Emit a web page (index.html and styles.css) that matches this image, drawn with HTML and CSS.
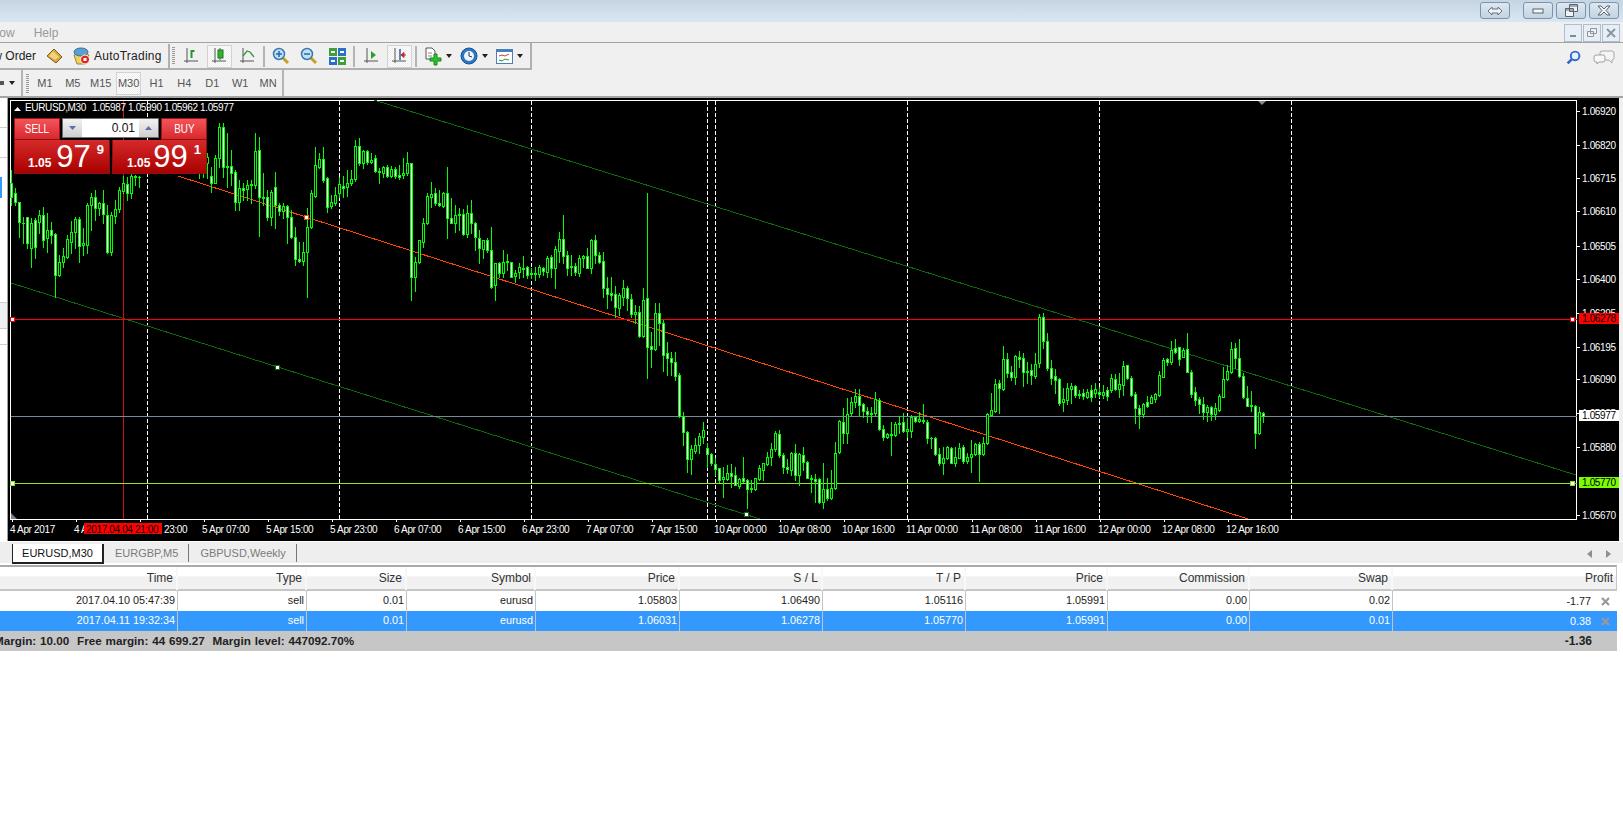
FILE: index.html
```html
<!DOCTYPE html>
<html lang="en">
<head>
    <meta charset="UTF-8">
    <meta name="viewport" content="width=device-width, initial-scale=1.0">
    <title>MetaTrader - EURUSD,M30</title>
    <link rel="stylesheet" href="styles.css">
</head>
<body>

<div class="titlebar">
    <div class="win-btn win-btn-switch">
        <svg width="16" height="10" viewBox="0 0 16 10"><path d="M5 1 1 5l4 4V7h6v2l4-4-4-4v2H5z" fill="#eef3f7" stroke="#66727e"/></svg>
    </div>
    <div class="win-btn win-btn-min">
        <svg width="12" height="6" viewBox="0 0 12 6"><rect x="1" y="1" width="10" height="4" fill="#f4f6f8" stroke="#56626e"/></svg>
    </div>
    <div class="win-btn">
        <svg width="13" height="13" viewBox="0 0 13 13"><path d="M4.500 .5h8v7h-8zM.5 4.500h8v8h-8z" fill="#eef3f7" stroke="#56626e"/><path d="M1 6h7M5 2h7" stroke="#56626e"/></svg>
    </div>
    <div class="win-btn">
        <svg width="14" height="11" viewBox="0 0 14 11"><path d="M1 1h3l3 3 3-3h3L9 5.500l4 4.500h-3L7 7l-3 3H1l4-4.500z" fill="#f4f6f8" stroke="#56626e"/></svg>
    </div>
</div>

<div class="menubar">
    <span class="menu-item menu-clipped">Window</span>
    <span class="menu-item">Help</span>
    <div class="mdi-buttons">
        <div class="mdi-btn"><svg width="8" height="8" viewBox="0 0 8 8"><path d="M1 7h6" stroke="#7d8c9b" stroke-width="2"/></svg></div>
        <div class="mdi-btn"><svg width="10" height="10" viewBox="0 0 10 10"><path d="M3.500 .5h6v5h-6zM.5 3.500h6v5h-6z" fill="#f0f0f0" stroke="#8a96a2"/></svg></div>
        <div class="mdi-btn"><svg width="10" height="10" viewBox="0 0 10 10"><path d="M1 1l8 8M9 1 1 9" stroke="#8a96a2" stroke-width="2"/></svg></div>
    </div>
</div>

<div class="toolrow">
    <div class="toolbar">
        <div class="tb-left">
            <span class="tb-text tb-clipped">New Order</span>
            <svg class="tb-book" width="17" height="16" viewBox="0 0 17 16"><path d="M8 1 16 9l-6 6-9-7z" fill="#d9a53c" stroke="#7f5a17"/><path d="M7 3l6 6-4 3-6-4z" fill="#f3d27a"/></svg>
            <svg class="tb-auto" width="17" height="18" viewBox="0 0 17 18"><path d="M1 8 9 5l7 3-3 9H4z" fill="#f0d060" stroke="#9a8430"/><ellipse cx="8" cy="5" rx="7" ry="4" fill="#5aa0d0" stroke="#36709c"/><circle cx="12" cy="12.500" r="4.500" fill="#e02818" stroke="#fff"/><rect x="10.500" y="11" width="3" height="3" fill="#fff"/></svg>
            <span class="tb-text tb-auto-text">AutoTrading</span>
        </div>
        <div class="gripper"></div>
        <div class="tool">
            <svg width="16" height="18" viewBox="0 0 16 18"><path d="M4 1v15M1 14h14" stroke="#555" fill="none"/><path d="M8.500 11V4h3" stroke="#1f9a2a" stroke-width="2" fill="none"/></svg>
        </div>
        <div class="tool tool-on">
            <svg width="16" height="18" viewBox="0 0 16 18"><path d="M4 1v15M1 14h14M9 1v12" stroke="#555" fill="none"/><rect x="7" y="3" width="5" height="8" fill="#35b030" stroke="#1b7a1c"/></svg>
        </div>
        <div class="tool">
            <svg width="16" height="18" viewBox="0 0 16 18"><path d="M4 1v15M1 14h14" stroke="#555" fill="none"/><path d="M4 9l4-5 3 1 4 5" stroke="#2f9a3a" stroke-width="1.300" fill="none"/></svg>
        </div>
        <div class="tb-sep"></div>
        <div class="tool">
            <svg width="18" height="18" viewBox="0 0 18 18"><path d="M11 11l5 5" stroke="#c8a020" stroke-width="3"/><circle cx="7" cy="7" r="5.500" fill="#bfe0f5" stroke="#3a78b0" stroke-width="1.500"/><path d="M4 7h6M7 4v6" stroke="#2a68a8" stroke-width="1.500"/></svg>
        </div>
        <div class="tool">
            <svg width="18" height="18" viewBox="0 0 18 18"><path d="M11 11l5 5" stroke="#c8a020" stroke-width="3"/><circle cx="7" cy="7" r="5.500" fill="#bfe0f5" stroke="#3a78b0" stroke-width="1.500"/><path d="M4 7h6" stroke="#2a68a8" stroke-width="1.500"/></svg>
        </div>
        <div class="tool">
            <svg width="17" height="17" viewBox="0 0 17 17"><rect width="8" height="8" fill="#3fa03a"/><rect x="9" width="8" height="8" fill="#2c6fc8"/><rect y="9" width="8" height="8" fill="#2c6fc8"/><rect x="9" y="9" width="8" height="8" fill="#3fa03a"/><path d="M2 4h4M11 4h4M2 13h4M11 13h4" stroke="#fff" stroke-width="2"/></svg>
        </div>
        <div class="tb-sep"></div>
        <div class="tool">
            <svg width="16" height="18" viewBox="0 0 16 18"><path d="M4 1v15M1 14h14" stroke="#555" fill="none"/><path d="M8 4l5 4-5 4z" fill="#2aa02a"/></svg>
        </div>
        <div class="tool tool-on">
            <svg width="16" height="18" viewBox="0 0 16 18"><path d="M4 1v15M1 14h14" stroke="#555" fill="none"/><path d="M9 2v11" stroke="#2a5fa8" stroke-width="1.500"/><path d="M15 8h-3M10 8l3-2.500v5z" fill="#c8281e" stroke="#c8281e"/></svg>
        </div>
        <div class="tb-sep"></div>
        <div class="tool-menu tool-menu-first">
            <svg width="18" height="19" viewBox="0 0 18 19"><path d="M2 1h6l3 3v8H2z" fill="#fff" stroke="#555"/><path d="M4 6h4M4 9h4" stroke="#888"/><path d="M10 7h3v4h4v3h-4v4h-3v-4H6v-3h4z" fill="#2fc02f" stroke="#178a17"/></svg>
            <span class="drop"></span>
        </div>
        <div class="tool-menu">
            <svg width="18" height="18" viewBox="0 0 18 18"><circle cx="9" cy="9" r="8" fill="#2a78c8" stroke="#1a4f90"/><circle cx="9" cy="9" r="5" fill="#eef5fb"/><path d="M9 5v4l3 1" stroke="#333" fill="none"/></svg>
            <span class="drop"></span>
        </div>
        <div class="tool-menu">
            <svg width="17" height="15" viewBox="0 0 17 15"><rect x=".5" y=".5" width="16" height="14" fill="#fff" stroke="#4f7fae"/><rect x="1" y="1" width="15" height="2" fill="#3f80c4"/><path d="M3 7l3-1 3 1 4-2" stroke="#c84030" fill="none"/><path d="M3 11l3 1 3-2 4 1" stroke="#2f9a3a" fill="none"/></svg>
            <span class="drop"></span>
        </div>
    </div>
    <div class="tb-right">
        <svg width="15" height="15" viewBox="0 0 14 14"><circle cx="8.500" cy="5.500" r="4" fill="#e8f1fb" stroke="#2f68c8" stroke-width="1.800"/><path d="M5.500 8.500 1.500 12.500" stroke="#2f68c8" stroke-width="2.500"/></svg>
        <svg width="22" height="15" viewBox="0 0 22 15"><path d="M9 1h10q2 0 2 2v5q0 2-2 2v3l-3-3H9q-2 0-2-2V3q0-2 2-2z" fill="#f4f4f4" stroke="#a8a8a8"/><path d="M3 5h7q2 0 2 2v3q0 2-2 2H6l-2 2v-2H3q-2 0-2-2V7q0-2 2-2z" fill="#f8f8f8" stroke="#a0a0a0"/></svg>
    </div>
</div>

<div class="toolrow toolrow-periods">
    <div class="periods">
        <div class="periods-left">
            <span class="mini-tool"></span>
            <span class="drop"></span>
        </div>
        <div class="gripper gripper-small"></div>
        <div class="period">M1</div>
        <div class="period">M5</div>
        <div class="period">M15</div>
        <div class="period period-on">M30</div>
        <div class="period">H1</div>
        <div class="period">H4</div>
        <div class="period">D1</div>
        <div class="period">W1</div>
        <div class="period">MN</div>
    </div>
</div>

<div class="workspace">
    <div class="navigator">
        <div class="nav-block nav-a"></div>
        <div class="nav-block nav-b"></div>
        <div class="nav-block nav-c"><div class="nav-selected"></div></div>
        <div class="nav-block nav-d"></div>
        <div class="nav-block nav-e"></div>
    </div>
    <div class="chart">
        <svg id="chart-svg" class="chart-svg" width="1611" height="443" viewBox="8 98 1611 443"></svg>
        <div class="trade-panel">
            <div class="trade-top">
                <div class="trade-btn"><span class="trade-word">SELL</span></div>
                <div class="lot">
                    <div class="lot-arrow"><svg width="7" height="4" viewBox="0 0 7 4"><path d="M0 0h7L3.500 4z" fill="#5a6fb0"/></svg></div>
                    <div class="lot-value">0.01</div>
                    <div class="lot-arrow"><svg width="7" height="4" viewBox="0 0 7 4"><path d="M0 4h7L3.500 0z" fill="#5a6fb0"/></svg></div>
                </div>
                <div class="trade-btn"><span class="trade-word">BUY</span></div>
            </div>
            <div class="trade-bottom">
                <div class="quote quote-sell"><span class="q-small">1.05</span><span class="q-big">97</span><span class="q-sup">9</span></div>
                <div class="quote quote-buy"><span class="q-small">1.05</span><span class="q-big">99</span><span class="q-sup">1</span></div>
            </div>
        </div>
    </div>
</div>

<div class="tabbar">
    <div class="tab tab-active">EURUSD,M30</div>
    <div class="tab">EURGBP,M5</div>
    <div class="tab">GBPUSD,Weekly</div>
    <div class="tab-arrows">
        <svg width="5" height="8" viewBox="0 0 5 8"><path d="M5 0v8L0 4z" fill="#8f8f8f"/></svg>
        <svg width="5" height="8" viewBox="0 0 5 8"><path d="M0 0v8l5-4z" fill="#8f8f8f"/></svg>
    </div>
</div>

<div class="blotter">
    <div class="blotter-row blotter-head">
        <div>Time</div><div>Type</div><div>Size</div><div>Symbol</div><div>Price</div><div>S / L</div><div>T / P</div><div>Price</div><div>Commission</div><div>Swap</div><div>Profit</div>
    </div>
    <div class="blotter-row">
        <div>2017.04.10 05:47:39</div><div>sell</div><div>0.01</div><div>eurusd</div><div>1.05803</div><div>1.06490</div><div>1.05116</div><div>1.05991</div><div>0.00</div><div>0.02</div>
        <div class="profit-cell">-1.77<svg class="close-x" width="9" height="9" viewBox="0 0 9 9"><path d="M1 1l7 7M8 1 1 8" stroke="#999" stroke-width="2.200"/></svg></div>
    </div>
    <div class="blotter-row blotter-selected">
        <div>2017.04.11 19:32:34</div><div>sell</div><div>0.01</div><div>eurusd</div><div>1.06031</div><div>1.06278</div><div>1.05770</div><div>1.05991</div><div>0.00</div><div>0.01</div>
        <div class="profit-cell">0.38<svg class="close-x" width="9" height="9" viewBox="0 0 9 9"><path d="M1 1l7 7M8 1 1 8" stroke="#999" stroke-width="2.200"/></svg></div>
    </div>
    <div class="blotter-summary">
        <div class="summary-text">Margin: 10.00&nbsp; Free margin: 44 699.27&nbsp; Margin level: 447092.70%</div>
        <div class="summary-profit">-1.36</div>
    </div>
</div>

<script src="chart.js"></script>
</body>
</html>
```

FILE: styles.css
```css
body {
    font-family: "Liberation Sans", Arial, sans-serif;
    margin: 0;
    padding: 0;
    background-color: #ffffff;
    color: #222222;
    overflow: hidden;
    height: 834px;
    font-size: 12px;
}

/* window title */
.titlebar {
    height: 22px;
    display: flex;
    justify-content: flex-end;
    align-items: flex-start;
    padding: 2px 4px 0 0;
    box-sizing: border-box;
    background: linear-gradient(#c6d5e2, #d9e7f3);
}
.win-btn {
    width: 30px;
    height: 17px;
    box-sizing: border-box;
    margin-left: 3px;
    border: 1px solid #7f93a8;
    border-radius: 3px;
    display: flex;
    align-items: center;
    justify-content: center;
    background: linear-gradient(#dce8f2, #c3d3e1);
}
.win-btn-min { margin-left: 13px; }

/* menu */
.menubar {
    height: 20px;
    box-sizing: border-box;
    display: flex;
    align-items: center;
    padding-top: 1px;
    background-color: #f0f0f0;
    overflow: hidden;
}
.menu-item {
    color: #999999;
    font-size: 12px;
    margin-right: 19px;
    padding-top: 1px;
}
.menu-clipped { margin-left: -28px; }
.mdi-buttons {
    display: flex;
    gap: 1px;
    margin-left: auto;
    margin-right: 3px;
}
.mdi-btn {
    width: 18px;
    height: 18px;
    box-sizing: border-box;
    border: 1px solid #a9bfd4;
    background-color: #e8eef4;
    display: flex;
    align-items: center;
    justify-content: center;
}

/* toolbars */
.toolrow {
    display: flex;
    height: 28px;
    box-sizing: border-box;
    border-top: 1px solid #a3a3a3;
    background-color: #f0f0f0;
}
.toolrow-periods {
    border-top: none;
    border-bottom: 2px solid #a3a3a3;
}
.toolbar {
    width: 532px;
    display: flex;
    align-items: center;
    box-sizing: border-box;
    padding-top: 1px;
    border-right: 2px solid #b0b0b0;
    border-bottom: 2px solid #b0b0b0;
}
.tb-left {
    width: 170px;
    height: 100%;
    flex-shrink: 0;
    box-sizing: border-box;
    display: flex;
    align-items: center;
    overflow: hidden;
    border-right: 2px solid #b0b0b0;
}
.tb-text { font-size: 12px; color: #222222; white-space: nowrap; }
.tb-auto-text { letter-spacing: 0.250px; }
.tb-clipped { margin-left: -22px; }
.tb-book { margin-left: 10px; }
.tb-auto { margin: 0 4px 0 10px; }
.gripper {
    width: 3px;
    height: 18px;
    margin: 0 2px;
    flex-shrink: 0;
    background: repeating-linear-gradient(#9a9a9a 0 1px, #f0f0f0 1px 2px);
}
.gripper-small { margin: 0 2px 0 3px; height: 19px; }
.tool {
    width: 25px;
    height: 23px;
    margin: 0 1.5px;
    box-sizing: border-box;
    flex-shrink: 0;
    display: flex;
    align-items: center;
    justify-content: center;
}
.tool-on, .period-on {
    border: 1.5px solid #d2d2d2;
    background: repeating-conic-gradient(#ffffff 0 25%, #ececec 0 50%) 0 0 / 2px 2px;
}
.tool-menu {
    display: flex;
    align-items: center;
    gap: 4px;
    flex-shrink: 0;
    margin-left: 8px;
}
.tool-menu-first { margin-left: 5px; }
.tb-sep {
    width: 2px;
    height: 21px;
    margin: 0 2px;
    flex-shrink: 0;
    background-color: #b4b4b4;
}
.drop {
    width: 0;
    height: 0;
    flex-shrink: 0;
    border-left: 3.500px solid transparent;
    border-right: 3.500px solid transparent;
    border-top: 4px solid #222222;
}
.tb-right {
    margin-left: auto;
    width: 65px;
    padding: 1px 8px 0 8px;
    box-sizing: border-box;
    display: flex;
    align-items: center;
    justify-content: space-between;
}
.periods {
    display: flex;
    align-items: center;
    height: 26px;
    width: 284px;
    box-sizing: border-box;
    border-right: 2px solid #b4b4b4;
}
.periods-left {
    width: 23px;
    height: 100%;
    box-sizing: border-box;
    flex-shrink: 0;
    display: flex;
    align-items: center;
    gap: 5px;
    border-right: 2px solid #b4b4b4;
}
.mini-tool {
    width: 4px;
    height: 4px;
    background-color: #555555;
}
.period {
    width: 25px;
    height: 23px;
    margin: 0 1.5px;
    box-sizing: border-box;
    display: flex;
    align-items: center;
    justify-content: center;
    font-size: 11px;
    color: #555555;
}

/* chart and navigator */
.workspace {
    display: flex;
    height: 443px;
    background-color: #f0f0f0;
}
.navigator {
    width: 8px;
    box-sizing: border-box;
    flex-shrink: 0;
    background-color: #ffffff;
    border-right: 1px solid #a0a0a0;
}
.nav-block { border-bottom: 1px solid #cfcfcf; box-sizing: border-box; }
.nav-a { height: 30px; }
.nav-b { height: 30px; }
.nav-c { height: 145px; padding-top: 19px; }
.nav-d { height: 26px; background-color: #f0f0f0; }
.nav-e { height: 16px; }
.nav-selected { width: 2px; height: 21px; background-color: #3399ff; }
.chart {
    width: 1611px;
    height: 443px;
    position: relative;
    background-color: #000000;
}
.chart-svg {
    display: block;
    font-family: "Liberation Sans", Arial, sans-serif;
    font-size: 10px;
    letter-spacing: -0.350px;
}

/* one click trading panel */
.trade-panel {
    position: absolute;
    left: 6px;
    top: 20px;
    width: 193px;
    color: #ffffff;
}
.trade-top { display: flex; height: 22px; }
.trade-btn {
    width: 46px;
    box-sizing: border-box;
    padding-bottom: 1px;
    display: flex;
    align-items: center;
    justify-content: center;
    background: linear-gradient(#f2555a, #d8282d);
    border: 1px solid #a01414;
    border-bottom: 1px solid #8e1010;
}
.trade-word {
    display: inline-block;
    font-size: 13px;
    transform: scaleX(0.76);
}
.lot {
    width: 97px;
    height: 20px;
    margin: 0 2px;
    box-sizing: border-box;
    border: 1px solid #6f6f6f;
    background-color: #ffffff;
    display: flex;
}
.lot-arrow {
    width: 19px;
    flex-shrink: 0;
    display: flex;
    align-items: center;
    justify-content: center;
    background: linear-gradient(#f2f2f2, #cfcfcf);
}
.lot-value {
    flex: 1;
    color: #111111;
    font-size: 12px;
    line-height: 18px;
    text-align: right;
    padding-right: 4px;
}
.trade-bottom { display: flex; justify-content: space-between; height: 34px; }
.quote {
    box-sizing: border-box;
    display: flex;
    align-items: baseline;
    height: 34px;
    line-height: 34px;
    background: linear-gradient(#d62a2a, #a80000);
    border: 1px solid #8e1010;
    border-top: none;
}
.quote-sell { width: 96px; padding-left: 13px; }
.quote-buy { width: 95px; padding-left: 14px; }
.q-small { font-size: 12px; font-weight: bold; margin-right: 5px; }
.quote-buy .q-small { margin-right: 3px; }
.q-big { font-size: 31px; }
.q-sup { font-size: 13px; font-weight: bold; line-height: 13px; margin-left: 6px; align-self: flex-start; margin-top: 3px; }

/* tabs */
.tabbar {
    height: 22px;
    box-sizing: border-box;
    margin-bottom: 2px;
    padding: 2px 0 0 12px;
    display: flex;
    background-color: #eeeeee;
    border-top: 1px solid #ffffff;
}
.tab {
    height: 18px;
    padding: 0 10px 0 11px;
    font-size: 11px;
    line-height: 18px;
    color: #7a7a7a;
    position: relative;
    border-right: 1px solid #777777;
}
.tab-active {
    width: 89px;
    padding: 0;
    text-align: center;
    color: #111111;
    background-color: #ffffff;
    border-left: 1px solid #222222;
    border-right: 2px solid #222222;
    border-bottom: 2px solid #222222;
}
.tab-arrows {
    margin-left: auto;
    width: 24px;
    margin-right: 12px;
    display: flex;
    justify-content: space-between;
    align-items: center;
}

/* terminal table */
.blotter { width: 1617px; }
.blotter-row {
    display: grid;
    grid-template-columns: 178px 129px 100px 129px 144px 143px 143px 142px 142px 143px 1fr;
    height: 20px;
    line-height: 19px;
    font-size: 10.800px;
    text-align: right;
    color: #222222;
}
.blotter-row div {
    padding-right: 2px;
    box-sizing: border-box;
    border-right: 1.500px solid #c4c4c4;
    white-space: nowrap;
}
.blotter-row .profit-cell {
    border-right: none;
    padding-right: 7px;
    display: flex;
    justify-content: flex-end;
    align-items: center;
}
.close-x { margin-left: 10px; }
.blotter-head {
    height: 26px;
    line-height: 23px;
    font-size: 12px;
    color: #333333;
    box-sizing: border-box;
    border-top: 2px solid #aaaaaa;
    border-bottom: 2px solid #c6c6c6;
    border-right: 1px solid #c6c6c6;
    background: linear-gradient(#ffffff 40%, #f0f0f0 45%, #f2f2f2);
}
.blotter-head div {
    padding-right: 3px;
    border-right: 2px solid #f8f8f8;
}
.blotter-head div:last-child { border-right: none; }
.blotter-selected {
    background-color: #3399ff;
    color: #ffffff;
}
.blotter-summary {
    height: 20px;
    display: flex;
    justify-content: space-between;
    line-height: 20px;
    font-size: 11.700px;
    font-weight: bold;
    color: #222222;
    background-color: #c6c6c6;
    overflow: hidden;
}
.summary-text { margin-left: -6px; white-space: nowrap; word-spacing: 0.600px; }
.summary-profit { padding-right: 25px; font-size: 12px; }
```

FILE: chart.js
```javascript
// Draws the EURUSD,M30 chart into the svg. Coordinates are page pixels
const svg = document.getElementById('chart-svg');
const NS = 'http://www.w3.org/2000/svg';

function add(name, attrs, parent, text) {
    const el = document.createElementNS(NS, name);
    for (const key in attrs) {
        el.setAttribute(key, attrs[key]);
    }
    if (text) el.textContent = text;
    (parent || svg).appendChild(el);
    return el;
}

function box(x, y, w, h, fill, parent) {
    return add('rect', { x: x, y: y, width: w, height: h, fill: fill, 'shape-rendering': 'crispEdges' }, parent);
}

function label(x, y, text, fill) {
    return add('text', { x: x, y: y, fill: fill || '#ffffff' }, svg, text);
}

// plot frame
add('rect', { x: 10.5, y: 100.5, width: 1566, height: 419, fill: 'none', stroke: '#ffffff', 'shape-rendering': 'crispEdges' });

// day separators
[147, 339, 531, 707, 715, 907, 1099, 1291].forEach(x => {
    add('line', { x1: x + 0.5, y1: 101, x2: x + 0.5, y2: 519, stroke: '#ffffff', 'stroke-dasharray': '4 2', 'shape-rendering': 'crispEdges' });
});

// crosshair
box(123, 101, 1, 418, '#cc1414');

// regression channel
const diagonals = [
    [374, 100, 1576, 475, '#0b6a0b'],
    [11, 283, 760, 519, '#0b6a0b'],
    [178, 176, 1248, 519, '#ff4500']
];
diagonals.forEach(d => {
    add('line', { x1: d[0], y1: d[1], x2: d[2], y2: d[3], stroke: d[4], 'shape-rendering': 'crispEdges' });
});

// order levels and bid line
box(11, 319, 1566, 1, '#ff0000');
box(11, 416, 1566, 1, '#778899');
box(11, 483, 1566, 1, '#8ee62a');

// each bar: body top, body bottom, high, low (in thirds of a pixel from the segment's y)
const segments = [
    { x: 11, y: 90, bars: [
        [280,320,240,345],[310,335,295,345],[335,395,335,440],[398,400,380,460],[380,460,380,475],[400,475,385,530],
        [390,470,385,505],[375,395,360,430],[375,450,350,470],[420,445,370,485],[420,435,395,460],[433,555,430,622],
        [517,555,495,558],[498,517,475,530],[448,502,435,505],[427,457,393,490],[388,427,380,475],[388,468,380,515],
        [460,465,415,495],[345,465,340,490],[320,345,310,420],[322,355,300,390],[340,355,335,375],[340,373,300,400],
        [375,485,345,490],[375,485,365,495],[358,378,330,400],[300,358,290,365],[280,302,258,310],[283,310,260,330],
        [258,310,250,325],[258,260,255,285],[260,262,258,290]
    ] },
    { x: 199, y: 90, bars: [
        [200,220,190,265],[200,220,190,262],[200,220,190,265],
        [258,278,230,305],[205,278,195,280],[112,205,100,230],[112,230,100,260],[228,232,130,290],[228,248,180,285],
        [245,335,240,360],[295,335,270,360],[295,300,280,330],[285,298,270,330],[282,285,270,340],[183,285,130,295],
        [180,322,140,438],[322,325,250,345],[322,380,300,390],[305,380,300,405],[292,345,245,415],[345,362,340,375],
        [348,362,340,385],[348,382,345,460],[380,442,360,445],[442,508,410,525],[508,512,455,515],[485,512,455,525],
        [412,485,355,622],[310,412,300,415],[225,318,170,320],[208,230,190,235],[208,270,170,275],[265,350,260,365],
        [337,347,315,355],[316,340,290,345],[283,310,260,320],[287,295,258,320],[280,292,240,318],[268,280,240,285],
        [168,268,150,272],[168,220,145,225],[183,220,180,235],[183,217,180,222],[210,217,190,220],[205,242,195,245],
        [242,247,235,280],[232,250,228,262],[232,258,225,262],[238,258,228,262],[238,257,232,265],[255,260,225,268],
        [248,256,205,265],[220,248,185,255],[220,560,218,630],[517,560,500,602],[450,515,450,520],[400,455,385,470],
        [318,400,310,402],[313,320,275,350],[310,340,295,345],[340,344,300,348],[310,348,305,352],[310,385,232,445],
        [385,398,325,400],[375,398,345,425],[373,376,355,420],[372,433,358,435],[368,433,345,440],[368,400,330,430],
        [398,440,395,480],[445,475,420,520],[450,478,450,505],[450,480,445,485],[480,590,410,595],[520,585,520,630],
        [518,550,515,560]
    ] },
    { x: 503, y: 180, bars: [
        [245,280,210,290],[244,246,222,270],[246,290,245,292],[280,287,270,305],[262,277,250,295],[263,268,228,290],
        [262,285,258,295],[278,282,265,295],[280,281,260,300],[262,282,255,290],[265,272,260,285],[235,275,228,290],
        [232,265,225,290],[207,265,198,323],[178,212,155,245],[178,228,105,250],[225,263,212,285],[258,262,225,285],
        [258,275,250,285],[235,278,225,288],[228,235,225,260],[228,263,205,265],[180,263,176,280],[180,225,165,250],
        [225,245,215,250],[244,325,215,350],[325,342,290,385],[340,346,290,360],[343,380,318,412],[345,384,340,405],
        [325,350,300,375],[325,355,318,390],[358,403,342,410],[397,403,375,430],[397,467,378,470],[360,467,325,470],
        [355,500,40,593],[498,508,455,560],[400,508,368,510],[400,430,368,495],[430,524,420,572],[520,535,487,585],
        [535,547,515,585],[547,587,515,600],[585,708,580,710],[708,755,695,795],[755,838,752,875],[808,838,795,882],
        [795,812,775,820],[768,796,760,820],[750,770,727,790],[805,823,790,860],[822,850,820,855],[853,867,835,885],
        [865,900,865,905],[892,898,860,952],[880,897,855,900],[880,887,852,920],[886,914,860,915],[898,917,895,925],
        [895,902,830,905],[900,928,898,983],[924,928,900,935],[895,928,893,930],[865,897,855,900],[850,870,848,900],
        [832,852,815,855],[808,832,790,855],[760,808,752,812],[763,826,750,830],[826,862,820,878],[860,868,838,880],
        [820,870,815,885],[820,884,792,900],[822,885,818,915],[826,845,800,870],[845,895,842,895],[895,898,885,935],
        [898,902,882,965],[898,967,895,968],[928,967,850,985],[928,953,895,960],[925,955,870,958],[818,925,785,928],
        [722,815,720,818],[725,760,685,790],[703,760,655,790],[665,700,650,705],[647,665,628,680],[647,675,628,705],
        [673,692,670,710],[694,703,680,725],[700,703,680,725],[658,700,635,705],[660,748,655,750],[748,772,735,780],
        [763,772,758,775],[763,765,725,825],[733,766,725,768],[730,732,708,760],[727,752,700,755],[748,754,715,770],
        [710,752,705,770],[710,724,708,725],[718,724,695,725],[720,724,672,728],[725,773,720,790],[773,775,770,805],
        [775,823,770,825],[823,848,805,855],[835,848,800,882],[802,835,798,838],[805,848,800,850],[832,848,800,858],
        [805,833,790,835],[802,843,795,850],[830,843,820,848],[823,832,780,875],[792,823,788,825],[793,823,785,903],
        [790,823,770,825],[703,790,700,792],[690,705,640,708],[612,692,598,695],[610,625,600,700]
    ] },
    { x: 1003, y: 300, bars: [
        [178,267,138,270],[178,220,160,230],[217,231,198,240],[168,231,165,252],[172,178,152,200],[175,215,160,258],
        [213,215,185,250],[210,224,192,252],[193,227,160,235],[52,190,42,200],[52,122,40,145],[122,203,98,210],
        [203,233,180,252],[228,240,208,280],[238,308,235,315],[298,305,265,333],[265,300,250,312],[258,267,250,310],
        [258,285,255,290],[283,285,270,295],[278,288,268,296],[277,290,268,295],[271,292,255,302],[268,280,250,292],
        [277,283,262,292],[277,285,255,295],[271,287,262,300],[235,271,222,275]
    ] },
    { x: 1115, y: 290, bars: [
        [268,298,252,300],[283,296,250,320],[228,285,212,315],[226,265,225,268],[265,315,258,318],[313,355,305,398],
        [355,372,345,413],[342,372,338,380],[337,347,318,352],[322,338,315,340],[313,327,308,335],[255,315,242,318],
        [210,260,205,262],[208,215,205,225],[180,215,152,222],[175,185,147,190],[172,208,170,225],[180,200,175,202],
        [178,245,128,247],[245,312,240,320],[307,330,290,345],[328,343,322,368],[343,365,322,388],[352,367,345,392],
        [350,373,348,390],[355,373,340,388],[318,360,312,362],[268,320,232,322],[243,268,225,270],[178,245,155,248],
        [175,205,160,235],[203,258,148,260],[258,322,250,325],[325,347,288,348],[346,347,303,362],[348,428,345,473],
        [367,430,352,432],[370,378,365,395]
    ] }
];

const candles = add('g', {});
let prevClose = 180;

segments.forEach(seg => {
    seg.bars.forEach((bar, i) => {
        const x = seg.x + i * 4;
        const top = Math.round(seg.y + bar[0] / 3);
        const bottom = Math.round(seg.y + bar[1] / 3);
        const high = Math.round(seg.y + bar[2] / 3);
        const low = Math.round(seg.y + bar[3] / 3);
        // a bar that opens near its top has fallen, falling bars are white inside
        const falling = Math.abs(top - prevClose) <= Math.abs(bottom - prevClose);
        prevClose = falling ? bottom : top;
        box(x, high, 1, low - high + 1, '#00ff00', candles);
        box(x - 1, top, 3, bottom - top + 1, '#00ff00', candles);
        if (bottom - top > 1) {
            box(x, top + 1, 1, bottom - top - 1, falling ? '#ffffff' : '#000000', candles);
        }
    });
});

// anchors of the lines
function anchor(x, y, color) {
    add('rect', { x: x - 2.5, y: y - 2, width: 4, height: 4, fill: '#ffffff', stroke: color, 'shape-rendering': 'crispEdges' });
}
anchor(13, 319, '#ff0000');
anchor(1573, 319, '#ff0000');
anchor(13, 483, '#8ee62a');
anchor(1573, 483, '#8ee62a');
anchor(278, 367, '#0b6a0b');
anchor(747, 514, '#0b6a0b');
anchor(307, 217, '#ff4500');

// little markers on the frame
add('path', { d: 'M1258 101h8l-4 4z', fill: '#7f8a96' });
add('path', { d: 'M11 513l6 6h-6z', fill: '#77828e' });

// header line
add('path', { d: 'M14 111l3.500-4 3.500 4z', fill: '#ffffff' });
label(25, 111, 'EURUSD,M30');
label(92, 111, '1.05987');
label(128, 111, '1.05990');
label(164, 111, '1.05962');
label(200, 111, '1.05977');

// price axis, 1.05770 sits where the green tag is
const prices = [
    ['1.06920', 111], ['1.06820', 145], ['1.06715', 178], ['1.06610', 211], ['1.06505', 246],
    ['1.06400', 279], ['1.06295', 313], ['1.06195', 347], ['1.06090', 379], ['1.05985', 413],
    ['1.05880', 447], ['1.05670', 515]
];
prices.forEach(p => {
    box(1577, p[1], 3, 1, '#ffffff');
    label(1582, p[1] + 3.5, p[0]);
});

const tags = [
    ['1.06278', 319, '#ff0000', '#000000'],
    ['1.05977', 416, '#ffffff', '#000000'],
    ['1.05770', 483, '#7cfc00', '#000000']
];
tags.forEach(t => {
    box(1579, t[1] - 6, 40, 11, t[2]);
    label(1582, t[1] + 3, t[0], t[3]);
});

// time axis, the crosshair tag hides the labels under it
const times = [
    [10, '4 Apr 2017'], [74, '4 A'], [164, '23:00'], [202, '5 Apr 07:00'], [266, '5 Apr 15:00'],
    [330, '5 Apr 23:00'], [394, '6 Apr 07:00'], [458, '6 Apr 15:00'], [522, '6 Apr 23:00'], [586, '7 Apr 07:00'],
    [650, '7 Apr 15:00'], [714, '10 Apr 00:00'], [778, '10 Apr 08:00'], [842, '10 Apr 16:00'], [906, '11 Apr 00:00'],
    [970, '11 Apr 08:00'], [1034, '11 Apr 16:00'], [1098, '12 Apr 00:00'], [1162, '12 Apr 08:00'], [1226, '12 Apr 16:00']
];
times.forEach(t => {
    label(t[0], 533, t[1]);
});
[12, 76, 140, 204, 268, 332, 396, 460, 524, 588, 652, 716, 780, 844, 908, 972, 1036, 1100, 1164, 1228].forEach(x => {
    box(x, 519, 1, 3, '#ffffff');
});
box(84, 523, 78, 11, '#ff0000');
label(86, 533, '2017.04.04 21:00', '#000000');
```
